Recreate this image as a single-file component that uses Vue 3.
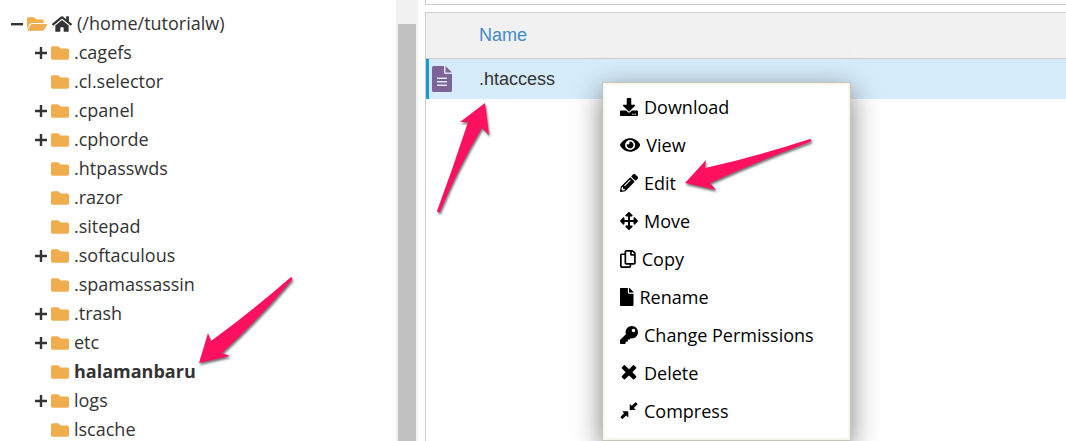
<script setup>
const folders = [
  { name: '.cagefs', expandable: true },
  { name: '.cl.selector' },
  { name: '.cpanel', expandable: true },
  { name: '.cphorde', expandable: true },
  { name: '.htpasswds' },
  { name: '.razor' },
  { name: '.sitepad' },
  { name: '.softaculous', expandable: true },
  { name: '.spamassassin' },
  { name: '.trash', expandable: true },
  { name: 'etc', expandable: true },
  { name: 'halamanbaru', current: true },
  { name: 'logs', expandable: true },
  { name: 'lscache' },
]

const actions = [
  {
    label: 'Download', w: 512,
    d: 'M216 0h80c13.3 0 24 10.7 24 24v168h87.7c17.8 0 26.7 21.5 14.1 34.1L269.7 378.3c-7.5 7.5-19.8 7.5-27.3 0L90.1 226.1c-12.6-12.6-3.7-34.1 14.1-34.1H192V24c0-13.3 10.7-24 24-24zm296 376v112c0 13.3-10.7 24-24 24H24c-13.3 0-24-10.7-24-24V376c0-13.3 10.7-24 24-24h146.7l49 49c20.1 20.1 52.5 20.1 72.6 0l49-49H488c13.3 0 24 10.7 24 24zm-124 88c0-11-9-20-20-20s-20 9-20 20 9 20 20 20 20-9 20-20zm64 0c0-11-9-20-20-20s-20 9-20 20 9 20 20 20 20-9 20-20z',
  },
  {
    label: 'View', w: 576,
    d: 'M572.52 241.4C518.29 135.59 410.93 64 288 64S57.68 135.64 3.48 241.41a32.35 32.35 0 0 0 0 29.19C57.71 376.41 165.07 448 288 448s230.32-71.64 284.52-177.41a32.35 32.35 0 0 0 0-29.19zM288 400a144 144 0 1 1 144-144 143.93 143.93 0 0 1-144 144zm0-240a95.31 95.31 0 0 0-25.31 3.79 47.85 47.85 0 0 1-66.9 66.9A95.78 95.78 0 1 0 288 160z',
  },
  {
    label: 'Edit', w: 512,
    d: 'M497.9 142.1l-46.1 46.1c-4.7 4.7-12.3 4.7-17 0l-111-111c-4.7-4.7-4.7-12.3 0-17l46.1-46.1c18.7-18.7 49.1-18.7 67.9 0l60.1 60.1c18.8 18.7 18.8 49.1 0 67.9zM284.2 99.8L21.6 362.4.4 483.9c-2.9 16.4 11.4 30.6 27.8 27.8l121.5-21.3 262.6-262.6c4.7-4.7 4.7-12.3 0-17l-111-111c-4.8-4.7-12.4-4.7-17.1 0zM124.1 339.9c-5.5-5.5-5.5-14.3 0-19.8l154-154c5.5-5.5 14.3-5.5 19.8 0s5.5 14.3 0 19.8l-154 154c-5.5 5.5-14.3 5.5-19.8 0zM88 424h48v36.3l-64.5 11.3-31.1-31.1L51.7 376H88v48z',
  },
  {
    label: 'Move', w: 512,
    d: 'M352.201 425.775l-79.196 79.196c-9.373 9.373-24.568 9.373-33.941 0l-79.196-79.196c-15.119-15.119-4.411-40.971 16.971-40.97h51.162L228 284H127.196v51.162c0 21.382-25.851 32.09-40.971 16.971L7.029 272.937c-9.373-9.373-9.373-24.569 0-33.941L86.225 159.8c15.119-15.119 40.971-4.411 40.971 16.971V228H228V127.196h-51.23c-21.382 0-32.09-25.851-16.971-40.971l79.196-79.196c9.373-9.373 24.568-9.373 33.941 0l79.196 79.196c15.119 15.119 4.411 40.971-16.971 40.971h-51.162V228h100.804v-51.162c0-21.382 25.851-32.09 40.97-16.971l79.196 79.196c9.373 9.373 9.373 24.569 0 33.941L425.773 352.2c-15.119 15.119-40.971 4.411-40.97-16.971V284H284v100.804h51.23c21.382 0 32.09 25.851 16.971 40.971z',
  },
  {
    label: 'Copy', w: 448,
    d: 'M433.941 65.941l-51.882-51.882A48 48 0 0 0 348.118 0H176c-26.51 0-48 21.49-48 48v48H48c-26.51 0-48 21.49-48 48v320c0 26.51 21.49 48 48 48h224c26.51 0 48-21.49 48-48v-48h80c26.51 0 48-21.49 48-48V99.882a48 48 0 0 0-14.059-33.941zM266 464H54a6 6 0 0 1-6-6V150a6 6 0 0 1 6-6h74v224c0 26.51 21.49 48 48 48h96v42a6 6 0 0 1-6 6zm128-96H182a6 6 0 0 1-6-6V54a6 6 0 0 1 6-6h106v88c0 13.255 10.745 24 24 24h88v202a6 6 0 0 1-6 6zm6-256h-64V48h9.632c1.591 0 3.117.632 4.243 1.757l48.368 48.368a6 6 0 0 1 1.757 4.243V112z',
  },
  {
    label: 'Rename', w: 384,
    d: 'M224 136V0H24C10.7 0 0 10.7 0 24v464c0 13.3 10.7 24 24 24h336c13.3 0 24-10.7 24-24V160H248c-13.2 0-24-10.8-24-24zm160-14.1v6.1H256V0h6.1c6.4 0 12.5 2.5 17 7l97.9 98c4.5 4.5 7 10.6 7 16.9z',
  },
  {
    label: 'Change Permissions', w: 512,
    d: 'M512 176.001C512 273.203 433.202 352 336 352c-11.22 0-22.19-1.062-32.827-3.069l-24.012 27.014A23.999 23.999 0 0 1 261.223 384H224v40c0 13.255-10.745 24-24 24h-40v40c0 13.255-10.745 24-24 24H24c-13.255 0-24-10.745-24-24v-78.059c0-6.365 2.529-12.47 7.029-16.971l161.802-161.802C163.108 213.814 160 195.271 160 176 160 78.798 238.797.001 335.999 0 433.488-.001 512 78.511 512 176.001zM336 128c0 26.51 21.49 48 48 48s48-21.49 48-48-21.49-48-48-48-48 21.49-48 48z',
  },
  {
    label: 'Delete', w: 512,
    d: 'M50 96L112 36q14-12 28 0l116 112L372 36q14-12 28 0l62 60q12 14 0 28L352 236l110 112q12 14 0 28l-62 60q-14 12-28 0L256 324 140 436q-14 12-28 0l-62-60q-12-14 0-28l110-112L50 124q-12-14 0-28z',
  },
  {
    label: 'Compress', w: 512,
    d: 'M276 76q0-26 18-8l42 42 98-94q12-12 24 0l34 34q12 12 0 24l-96 96 42 42q18 18-8 18H296q-20 0-20-20zM236 416q0 26-18 8l-42-42-98 94q-12 12-24 0l-34-34q-12-12 0-24l96-96-42-42q-18-18 8-18h134q20 0 20 20z',
  },
]
</script>

<template>
  <div class="manager">
    <nav class="sidebar" aria-label="Folders">
      <ul class="tree">
        <li>
          <div class="node">
            <button class="toggle" type="button" aria-label="Collapse home">
              <svg viewBox="0 0 12 12"><path d="M0 5h12v2.4H0z" /></svg>
            </button>
            <a class="link" href="#home">
              <svg class="folder open" viewBox="0 0 576 512"><path d="M572.694 292.093L500.27 416.248A63.997 63.997 0 0 1 444.989 448H45.025c-18.523 0-30.064-20.093-20.731-36.093l72.424-124.155A64 64 0 0 1 152 256h399.964c18.523 0 30.064 20.093 20.73 36.093zM152 224h328v-48c0-26.51-21.49-48-48-48H272l-64-64H48C21.49 64 0 85.49 0 112v278.046l69.077-118.418C86.214 242.25 117.989 224 152 224z" /></svg>
              <svg class="home" viewBox="0 0 576 512"><path d="M280.37 148.26L96 300.11V464a16 16 0 0 0 16 16l112.06-.29a16 16 0 0 0 15.92-16V368a16 16 0 0 1 16-16h64a16 16 0 0 1 16 16v95.64a16 16 0 0 0 16 16.05L464 480a16 16 0 0 0 16-16V300L295.67 148.26a12.19 12.19 0 0 0-15.3 0zM571.6 251.47L488 182.56V44.05a12 12 0 0 0-12-12h-56a12 12 0 0 0-12 12v72.61L318.47 43a48 48 0 0 0-61 0L4.34 251.47a12 12 0 0 0-1.6 16.9l25.5 31A12 12 0 0 0 45.15 301l235.22-193.74a12.19 12.19 0 0 1 15.3 0L530.9 301a12 12 0 0 0 16.9-1.6l25.5-31a12 12 0 0 0-1.7-16.93z" /></svg>
              <span>(/home/tutorialw)</span>
            </a>
          </div>
          <ul class="children">
            <li v-for="folder in folders" :key="folder.name" class="node">
              <button v-if="folder.expandable" class="toggle" type="button" :aria-label="`Expand ${folder.name}`">
                <svg viewBox="0 0 12 12"><path d="M4.8 0h2.4v4.8H12v2.4H7.2V12H4.8V7.2H0V4.8h4.8z" /></svg>
              </button>
              <span v-else class="toggle"></span>
              <a class="link" :class="{ current: folder.current }" :href="`#${folder.name}`">
                <svg class="folder" viewBox="0 0 512 512"><path d="M464 128H272l-64-64H48C21.49 64 0 85.49 0 112v288c0 26.51 21.49 48 48 48h416c26.51 0 48-21.49 48-48V176c0-26.51-21.49-48-48-48z" /></svg>
                <span>{{ folder.name }}</span>
              </a>
            </li>
          </ul>
        </li>
      </ul>
      <div class="scrollbar"><div class="thumb"></div></div>
    </nav>

    <main class="content">
      <div class="toolbar"></div>
      <div class="files">
        <table>
          <thead>
            <tr>
              <th class="type"></th>
              <th><a href="#sort-name">Name</a></th>
            </tr>
          </thead>
          <tbody>
            <tr>
              <td class="type">
                <svg class="doc" viewBox="0 0 20 26"><path d="M1.500 0H12v6.500A1.500 1.500 0 0 0 13.500 8H20v16.500A1.500 1.500 0 0 1 18.500 26h-17A1.500 1.500 0 0 1 0 24.500v-23A1.500 1.500 0 0 1 1.500 0zM5 11.500v1.500h10v-1.500zm0 3.500v1.500h10V15zm0 3.500V20h10v-1.500z" /><path d="M13.500 0L20 6.500h-6.500z" /></svg>
              </td>
              <td>.htaccess</td>
            </tr>
          </tbody>
        </table>
      </div>
    </main>

    <div class="menu" role="menu">
      <button v-for="action in actions" :key="action.label" class="item" type="button" role="menuitem">
        <svg class="glyph" :viewBox="`0 0 ${action.w} 512`"><path :d="action.d" /></svg>
        <span>{{ action.label }}</span>
      </button>
    </div>

    <svg class="pointers" viewBox="0 0 1066 441" aria-hidden="true">
      <path d="M485 103L489 135L482 128Q458 168 440 212Q438 213 437 211Q453 168 468 122L460 122Z" />
      <path d="M685 183L706 160L705 168Q758 156 810 139Q813 140 810 142Q758 161 710 183L716 190Z" />
      <path d="M199 363L208 333L211 341Q252 311 291 277Q293 278 292 280Q259 319 222 353L230 356Z" />
    </svg>
  </div>
</template>

<style>
html,
body {
  background: #fff;
  overflow: hidden;
}
</style>

<style scoped>
.manager {
  position: relative;
  display: flex;
  gap: 7px;
  height: 100vh;
  overflow: hidden;
  color: #333;
  font: 18px/29px "Open Sans", "Noto Sans", sans-serif;
}

svg {
  display: block;
  flex: none;
  fill: currentColor;
}

button {
  margin: 0;
  padding: 0;
  border: 0;
  background: none;
  color: inherit;
  font: inherit;
}

a {
  color: inherit;
  text-decoration: none;
}

.sidebar {
  display: flex;
  flex: none;
  width: 418px;
}

.tree {
  flex: 1;
  padding: 9px 0 0 11px;
}

ul {
  margin: 0;
  padding: 0;
  list-style: none;
}

.children {
  padding-left: 24px;
}

.node,
.link {
  display: flex;
  align-items: center;
}

.toggle {
  flex: none;
  width: 12px;
  margin-right: 4px;
}

.toggle svg {
  width: 12px;
  height: 12px;
}

.link {
  gap: 5px;
}

.folder {
  width: 18px;
  height: 18px;
  color: #f0ad4e;
}

.folder.open,
.home {
  width: 20px;
  height: 18px;
}

.current {
  font-weight: 700;
}

.scrollbar {
  width: 18px;
  padding: 24px 2px 0;
  background: #f1f1f1;
}

.thumb {
  height: 100%;
  background: #c1c1c1;
}

.content {
  display: flex;
  flex: 1;
  flex-direction: column;
  gap: 7px;
  min-width: 0;
}

.toolbar {
  height: 4px;
  border: solid #ccc;
  border-width: 0 0 1px 1px;
}

.files {
  flex: 1;
  border: solid #ccc;
  border-width: 1px 0 0 1px;
}

table {
  width: 100%;
  border-spacing: 0;
  font-family: "Liberation Sans", Arial, sans-serif;
}

th,
td {
  height: 40px;
  padding: 0;
  text-align: left;
}

th {
  height: 45px;
  border-bottom: 1px solid #ccc;
  background: #f1f1f1;
  color: #428bca;
  font-weight: 400;
}

td {
  background: #d6ecfa;
}

.type {
  width: 53px;
}

td.type {
  width: 50px;
  border-left: 3px solid #179bd7;
}

.doc {
  width: 20px;
  height: 26px;
  margin-left: 3px;
  color: #7e6399;
}

.menu {
  position: absolute;
  top: 82px;
  left: 602px;
  display: flex;
  flex-direction: column;
  box-sizing: border-box;
  width: 249px;
  padding: 5px 15px 10px;
  border: 1px solid #c5c5b8;
  background: #fff;
  box-shadow: inset 0 0 0 2px #f7f7ee, 0 8px 26px rgba(0, 0, 0, 0.5);
  color: #000;
}

.item {
  display: flex;
  align-items: center;
  gap: 6px;
  height: 38px;
  padding-left: 2px;
}

.glyph {
  width: auto;
  height: 18px;
}

.pointers {
  position: absolute;
  top: 0;
  left: 0;
  width: 1066px;
  height: 441px;
  fill: #ff1160;
  filter: drop-shadow(1px 2px 1px rgba(0, 0, 0, 0.55));
  pointer-events: none;
}
</style>
